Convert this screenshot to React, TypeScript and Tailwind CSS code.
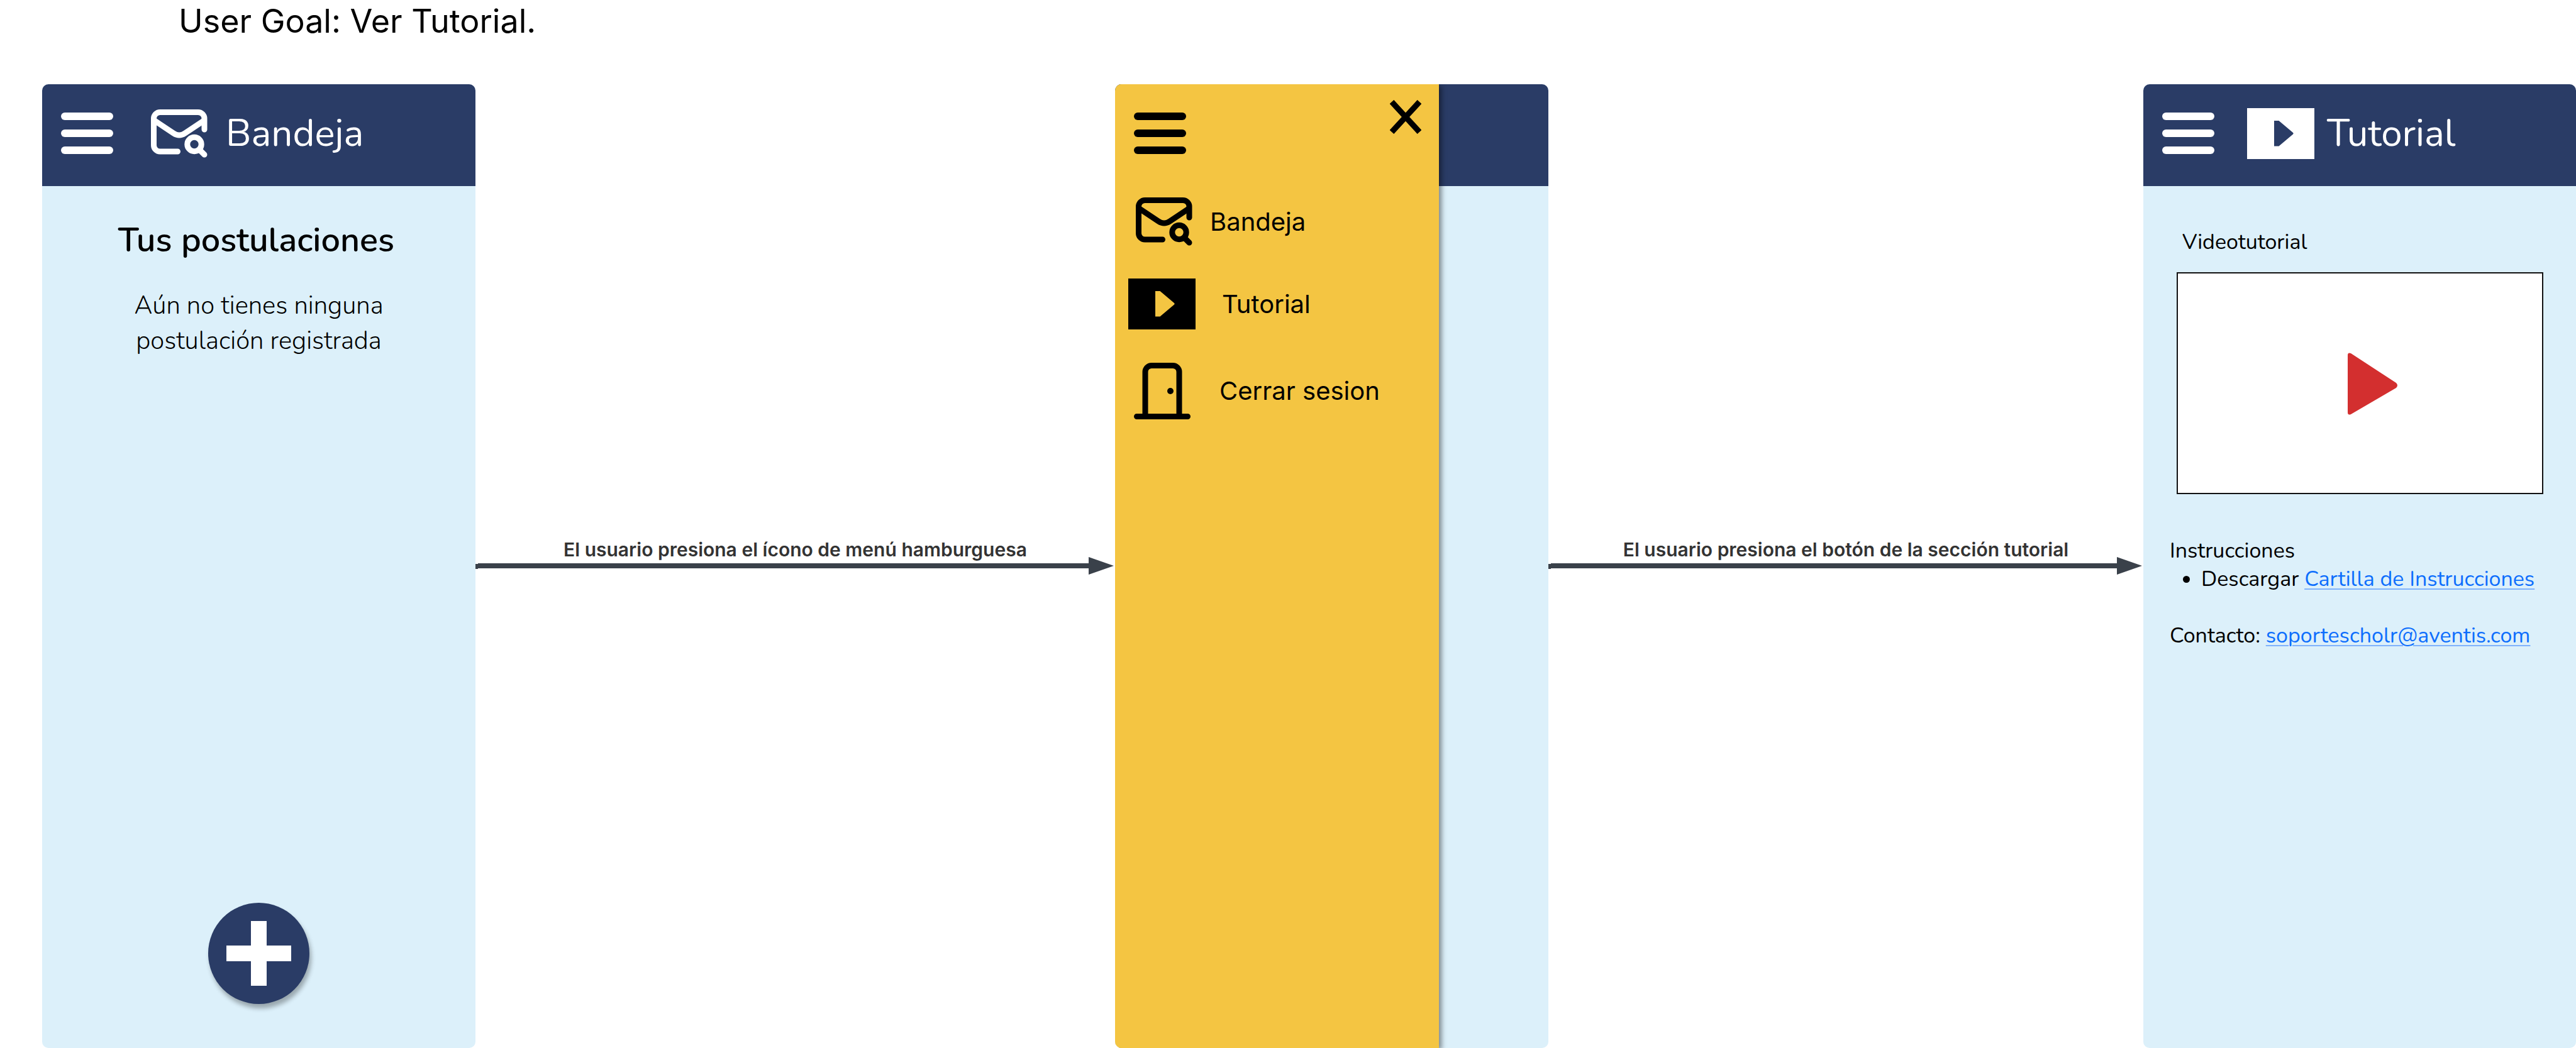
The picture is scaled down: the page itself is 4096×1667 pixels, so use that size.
import type { ReactNode } from "react";

function Burger({ color }: { color: string }) {
  return (
    <button type="button" aria-label="Menú" className={`flex w-[83px] shrink-0 flex-col gap-[15px] ${color}`}>
      <span className="h-3 rounded-full bg-current" />
      <span className="h-3 rounded-full bg-current" />
      <span className="h-3 rounded-full bg-current" />
    </button>
  );
}

function MailSearch() {
  return (
    <svg viewBox="0 0 90 77" className="h-[77px] w-[90px] shrink-0" fill="none" stroke="currentColor" strokeWidth="9" strokeLinecap="round" strokeLinejoin="round" aria-hidden="true">
      <path d="M85 32V14.500a10 10 0 0 0-10-10h-60.500a10 10 0 0 0-10 10v42.500a10 10 0 0 0 10 10H42.500" />
      <path d="M6 18L36 38q9 6 18 0L84 18" />
      <circle cx="69" cy="55.500" r="11.200" />
      <path d="M78 65L85 72" />
    </svg>
  );
}

function PlayBox({ tri }: { tri: string }) {
  return (
    <svg viewBox="0 0 107 81" className="h-[81px] w-[107px] shrink-0" aria-hidden="true">
      <rect width="107" height="81" fill="currentColor" />
      <path className={tri} d="M43 20h7.500l22.500 19q1.500 1.200 0 2.400L50.500 60.500h-7.500z" />
    </svg>
  );
}

function Door() {
  return (
    <svg viewBox="0 0 90 90" className="h-[90px] w-[90px] shrink-0" fill="none" stroke="currentColor" strokeWidth="9" strokeLinecap="round" aria-hidden="true">
      <path d="M4.500 85.500h81M18 85V14.500a10 10 0 0 1 10-10h34a10 10 0 0 1 10 10V85" />
      <circle cx="58" cy="45" r="5" fill="currentColor" stroke="none" />
    </svg>
  );
}

function Arrow({ children }: { children: ReactNode }) {
  return (
    <div className="flex flex-col pt-[722px]">
      <p className="text-center text-[30px] leading-[36px] font-semibold text-[#333333]">{children}</p>
      <div className="-mt-[6px] flex items-center pr-[2px]" aria-hidden="true">
        <div className="h-2 w-1 translate-y-px bg-[#3a414a]" />
        <div className="h-2 flex-1 bg-[#3a414a]" />
        <svg viewBox="0 0 40 28" className="h-7 w-10">
          <path d="M0 0L40 14L0 28z" fill="#3a414a" />
        </svg>
      </div>
    </div>
  );
}

function Screen({ header, children }: { header?: ReactNode; children?: ReactNode }) {
  return (
    <section className="relative flex flex-col overflow-hidden rounded-[10px] bg-[#dcf0fa]">
      <header className="flex h-[162px] shrink-0 items-center bg-[#2a3c66] pb-[6px] pl-[30px] text-white">{header}</header>
      {children}
    </section>
  );
}

function MenuItem({ icon, label, box, href }: { icon: ReactNode; label: string; box: string; href: string }) {
  return (
    <li>
      <a href={href} className={`flex items-center text-[40px] leading-[48px] ${box}`}>
        {icon}
        {label}
      </a>
    </li>
  );
}

function TextLink({ href, children }: { href: string; children: ReactNode }) {
  return (
    <a href={href} className="text-[#0d6efd] underline decoration-[#7fb2fc] decoration-2 underline-offset-4">
      {children}
    </a>
  );
}

export default function App() {
  return (
    <main className="flex min-h-screen flex-col bg-white pl-[67px] font-['Inter',sans-serif] text-black">
      <h1 className="h-[134px] pl-[217px] pt-[2px] text-[52px] leading-[63px]">User Goal: Ver Tutorial.</h1>
      <div className="grid flex-1 grid-cols-[689fr_1017fr_689fr_946fr_688fr]">
        <Screen
          header={
            <>
              <Burger color="text-white" />
              <div className="flex items-center gap-[29px] pl-[60px]">
                <MailSearch />
                <h2 className="font-['Nunito','Lato',sans-serif] text-[60px] leading-[72px]">Bandeja</h2>
              </div>
            </>
          }
        >
          <div className="flex flex-1 flex-col items-center pt-[50px] pb-[70px] text-center font-['Nunito','Lato',sans-serif]">
            <h3 className="pr-2 text-[54px] leading-[72px] font-semibold">Tus postulaciones</h3>
            <p className="w-[440px] pt-[40px] text-[40px] leading-[56px] font-light">Aún no tienes ninguna postulación registrada</p>
            <button type="button" aria-label="Agregar" className="mt-auto flex size-[161px] items-center justify-center rounded-full bg-[#2a3c66] shadow-[3px_7px_7px_rgba(0,0,0,0.3)]">
              <svg viewBox="0 0 103 103" className="size-[103px]" aria-hidden="true">
                <path d="M39 0h25v39h39v25H64v39H39V64H0V39h39z" fill="#fff" />
              </svg>
            </button>
          </div>
        </Screen>

        <Arrow>El usuario presiona el ícono de menú hamburguesa</Arrow>

        <Screen>
          <nav className="absolute inset-y-0 left-0 w-[515px] bg-[#f4c542] shadow-[4px_3px_8px_rgba(0,0,0,0.45)]">
            <div className="flex h-[162px] items-center justify-between pr-[28px] pb-[6px] pl-[30px]">
              <Burger color="text-black" />
              <button type="button" aria-label="Cerrar" className="mb-[53px]">
                <svg viewBox="0 0 50 54" className="h-[54px] w-[50px]" stroke="currentColor" strokeWidth="9" aria-hidden="true">
                  <path d="M3 3L47 51M47 3L3 51" />
                </svg>
              </button>
            </div>
            <ul>
              <MenuItem href="#bandeja" icon={<MailSearch />} label="Bandeja" box="gap-[28px] pt-[18px] pl-[33px]" />
              <MenuItem href="#tutorial" icon={<PlayBox tri="fill-[#f4c542]" />} label="Tutorial" box="gap-[42px] pt-[52px] pl-[21px]" />
              <MenuItem href="#salir" icon={<Door />} label="Cerrar sesion" box="gap-[46px] pt-[53px] pl-[30px]" />
            </ul>
          </nav>
        </Screen>

        <Arrow>El usuario presiona el botón de la sección tutorial</Arrow>

        <Screen
          header={
            <>
              <Burger color="text-white" />
              <div className="flex items-center gap-[20px] pl-[52px]">
                <PlayBox tri="fill-[#2a3c66]" />
                <h2 className="font-['Nunito','Lato',sans-serif] text-[60px] leading-[72px]">Tutorial</h2>
              </div>
            </>
          }
        >
          <div className="flex flex-col pt-[67px] pr-[52px] pl-[42px] font-['Nunito','Lato',sans-serif] text-[34px] leading-[45px]">
            <h3 className="pl-5">Videotutorial</h3>
            <button type="button" aria-label="Reproducir video" className="mt-[25px] ml-[11px] flex h-[353px] items-center justify-center border-2 border-[#111111] bg-white">
              <svg viewBox="0 0 80 100" className="ml-10 h-[100px] w-20" aria-hidden="true">
                <path d="M0 5q0-5 5-3L77 49q4 4 0 8L5 99q-5 2-5-3z" fill="#d32f2f" />
              </svg>
            </button>
            <h3 className="pt-[68px]">Instrucciones</h3>
            <ul className="list-disc pl-[50px]">
              <li>
                Descargar <TextLink href="#cartilla">Cartilla de Instrucciones</TextLink>
              </li>
            </ul>
            <p className="pt-[45px]">
              Contacto: <TextLink href="mailto:soportescholr@aventis.com">soportescholr@aventis.com</TextLink>
            </p>
          </div>
        </Screen>
      </div>
    </main>
  );
}
